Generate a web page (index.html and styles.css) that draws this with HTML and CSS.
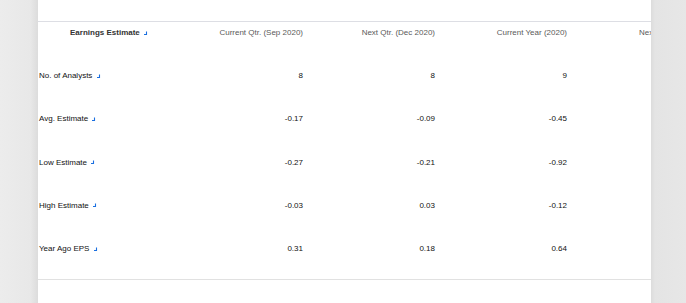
FILE: index.html
```html
<!DOCTYPE html>
<html>
<head>
<meta charset="utf-8">
<link rel="stylesheet" href="styles.css">
</head>
<body>
<div class="page">
  <div class="side side-left"></div>
  <div class="panel">
    <div class="table">
      <div class="row head">
        <div class="cell label first">Earnings Estimate <svg class="ic" width="5" height="5" viewBox="0 0 5 5"><path d="M3.5 0.5 V3.5 H1" fill="none" stroke="#1a6fe0" stroke-width="1.1"/></svg></div>
        <div class="cell">Current Qtr. (Sep 2020)</div>
        <div class="cell">Next Qtr. (Dec 2020)</div>
        <div class="cell">Current Year (2020)</div>
        <div class="cell">Next Year (2021)</div>
      </div>
      <div class="row">
        <div class="cell label">No. of Analysts <svg class="ic" width="5" height="5" viewBox="0 0 5 5"><path d="M3.5 0.5 V3.5 H1" fill="none" stroke="#1a6fe0" stroke-width="1.1"/></svg></div>
        <div class="cell">8</div><div class="cell">8</div><div class="cell">9</div>
      </div>
      <div class="row">
        <div class="cell label">Avg. Estimate <svg class="ic" width="5" height="5" viewBox="0 0 5 5"><path d="M3.5 0.5 V3.5 H1" fill="none" stroke="#1a6fe0" stroke-width="1.1"/></svg></div>
        <div class="cell">-0.17</div><div class="cell">-0.09</div><div class="cell">-0.45</div>
      </div>
      <div class="row">
        <div class="cell label">Low Estimate <svg class="ic" width="5" height="5" viewBox="0 0 5 5"><path d="M3.5 0.5 V3.5 H1" fill="none" stroke="#1a6fe0" stroke-width="1.1"/></svg></div>
        <div class="cell">-0.27</div><div class="cell">-0.21</div><div class="cell">-0.92</div>
      </div>
      <div class="row">
        <div class="cell label">High Estimate <svg class="ic" width="5" height="5" viewBox="0 0 5 5"><path d="M3.5 0.5 V3.5 H1" fill="none" stroke="#1a6fe0" stroke-width="1.1"/></svg></div>
        <div class="cell">-0.03</div><div class="cell">0.03</div><div class="cell">-0.12</div>
      </div>
      <div class="row">
        <div class="cell label">Year Ago EPS <svg class="ic" width="5" height="5" viewBox="0 0 5 5"><path d="M3.5 0.5 V3.5 H1" fill="none" stroke="#1a6fe0" stroke-width="1.1"/></svg></div>
        <div class="cell">0.31</div><div class="cell">0.18</div><div class="cell">0.64</div>
      </div>
    </div>
  </div>
  <div class="side side-right"></div>
</div>
</body>
</html>
```
FILE: styles.css
```css
html, body {
  margin: 0;
  padding: 0;
  background: #e6e6e6;
}
.page {
  display: flex;
  width: 686px;
  height: 303px;
  overflow: hidden;
  font-family: "Liberation Sans", Arial, sans-serif;
  font-size: 8px;
  color: #111111;
}
.side {
  height: 303px;
}
.side-left {
  width: 38px;
  flex: none;
  background: linear-gradient(to right, #ececec 0%, #e8e8e8 80%, #dcdcdc 100%);
}
.side-right {
  width: 35px;
  flex: none;
  background: linear-gradient(to right, #dcdcdc 0px, #e4e4e4 4px, #e7e7e7 100%);
}
.panel {
  width: 613px;
  flex: none;
  background: #ffffff;
  overflow: hidden;
  padding-top: 21px;
  box-sizing: border-box;
}
.table {
  width: 661px;
  border-top: 1px solid #dddee4;
  border-bottom: 1px solid #e1e1e1;
  padding-bottom: 8.5px;
}
.row {
  display: grid;
  grid-template-columns: 133px 132px 132px 132px 132px;
  height: 43.25px;
  line-height: 43.25px;
}
.row.head {
  height: 32px;
  line-height: 22px;
  color: #5a5a5a;
}
.cell {
  text-align: right;
  white-space: nowrap;
}
.cell.label {
  text-align: left;
  padding-left: 1px;
}
.cell.first {
  padding-left: 32px;
  font-weight: bold;
  color: #333333;
}
.ic {
  vertical-align: -0.5px;
  margin-left: 1px;
}
```
